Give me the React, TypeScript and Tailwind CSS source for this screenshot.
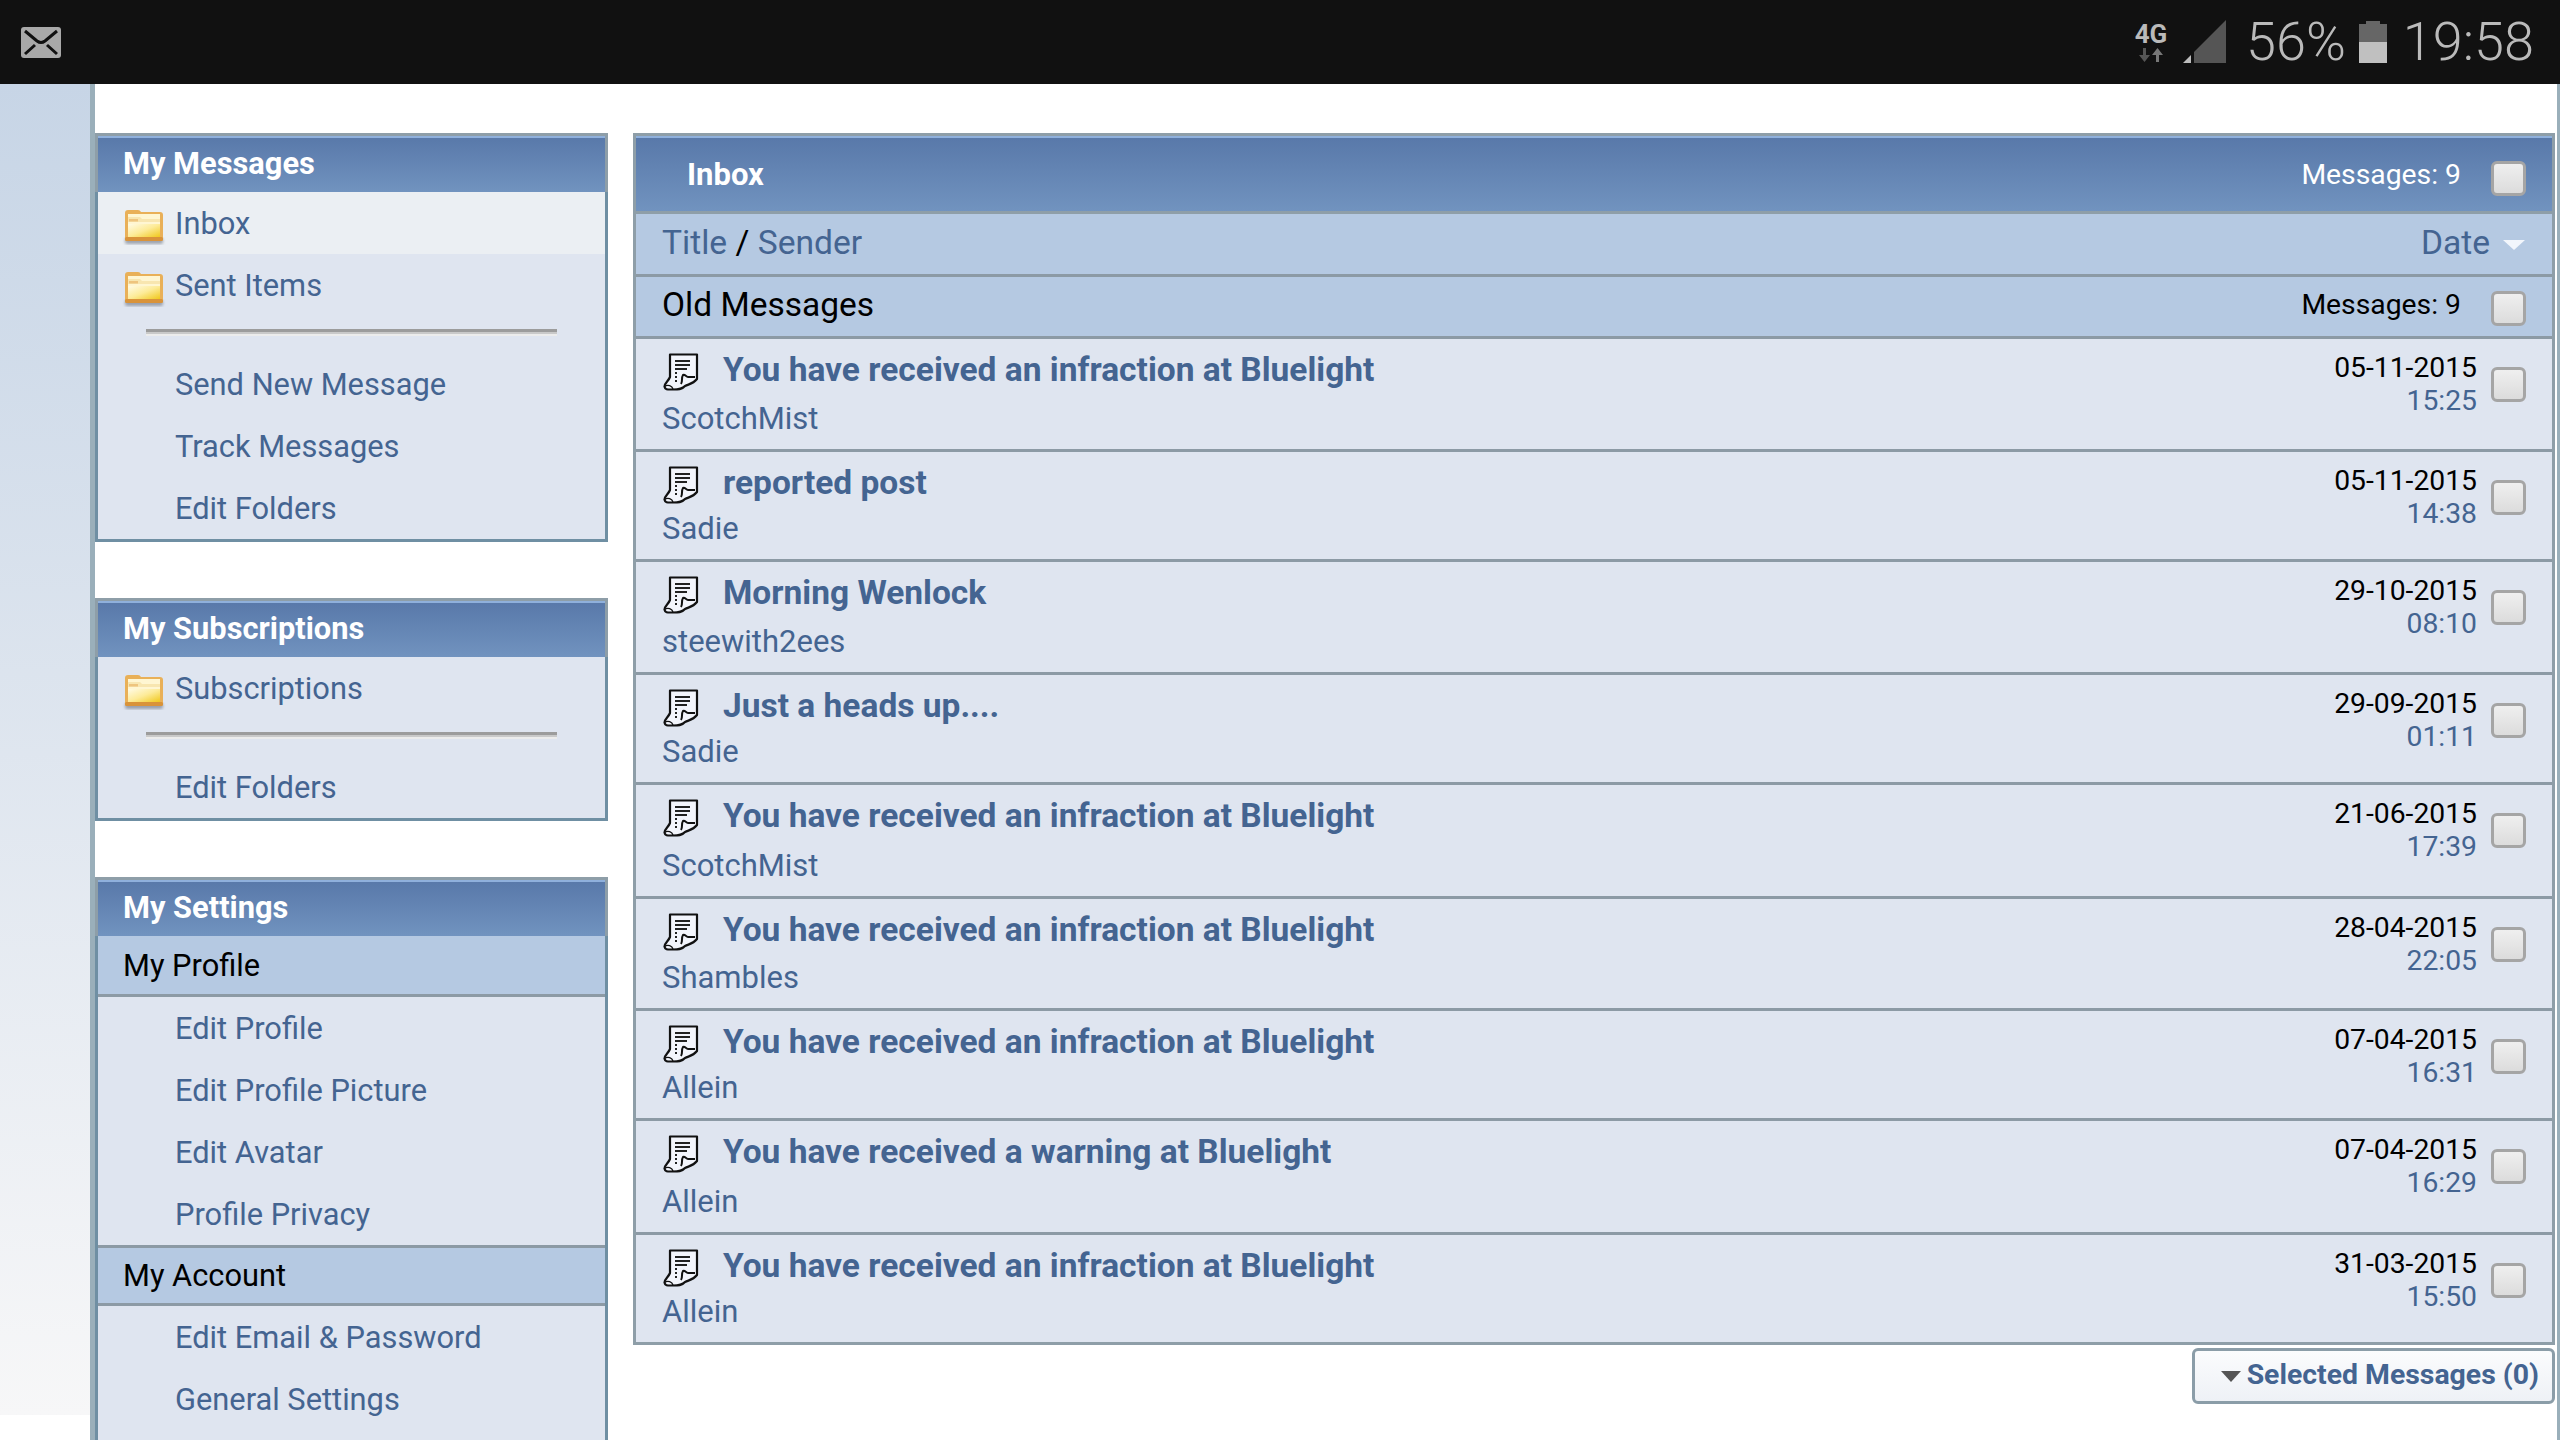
import React from "react";

const rows = [
  { h: "h-[113px]", t: "You have received an infraction at Bluelight", s: "ScotchMist", d: "05-11-2015", c: "15:25" },
  { h: "h-[110px]", t: "reported post", s: "Sadie", d: "05-11-2015", c: "14:38" },
  { h: "h-[113px]", t: "Morning Wenlock", s: "steewith2ees", d: "29-10-2015", c: "08:10" },
  { h: "h-[110px]", t: "Just a heads up....", s: "Sadie", d: "29-09-2015", c: "01:11" },
  { h: "h-[114px]", t: "You have received an infraction at Bluelight", s: "ScotchMist", d: "21-06-2015", c: "17:39" },
  { h: "h-[112px]", t: "You have received an infraction at Bluelight", s: "Shambles", d: "28-04-2015", c: "22:05" },
  { h: "h-[110px]", t: "You have received an infraction at Bluelight", s: "Allein", d: "07-04-2015", c: "16:31" },
  { h: "h-[114px]", t: "You have received a warning at Bluelight", s: "Allein", d: "07-04-2015", c: "16:29" },
  { h: "h-[107px]", t: "You have received an infraction at Bluelight", s: "Allein", d: "31-03-2015", c: "15:50" },
];

function Folder() {
  return (
    <svg width="44" height="40" viewBox="0 0 44 40" className="shrink-0">
      <defs>
        <linearGradient id="fg" x1="0" y1="0" x2="1" y2="1">
          <stop offset="0" stopColor="#fffbe6" />
          <stop offset="0.5" stopColor="#fdeb98" />
          <stop offset="1" stopColor="#f0c81c" />
        </linearGradient>
        <filter id="fb"><feGaussianBlur stdDeviation="1.4" /></filter>
      </defs>
      <rect x="3" y="31" width="38" height="6" rx="2" fill="#6b7280" opacity="0.6" filter="url(#fb)" />
      <path d="M3 6 Q3 3 6 3 H16 Q18 3 19 5 H38 Q41 5 41 8 V31 Q41 34 38 34 H6 Q3 34 3 31 Z" fill="#e9b058" />
      <path d="M6 7 H38 V30 H6 Z" fill="#fff6d2" />
      <path d="M6 10 H18 L20 12 H38 V15 H6 Z" fill="#f8e6b0" />
      <rect x="7" y="12" width="9" height="2.5" fill="#eec47e" />
      <path d="M6 17 H38 V30 H6 Z" fill="url(#fg)" />
      <rect x="3" y="30" width="38" height="4" rx="1.5" fill="#d9933a" />
    </svg>
  );
}

function NoteIcon() {
  return (
    <svg width="36" height="38" viewBox="0 0 36 38" className="shrink-0">
      <path d="M7 1.5 H34 V26 C30 31 26 31 22 33 C19 36.5 15 36.5 10 36.5 C5 36.5 2 37 1.5 33.5 C1.5 30 5.5 28 7 24 Z" fill="#f3f5fc" stroke="#111" strokeWidth="2.2" strokeLinejoin="round" />
      <path d="M12 8 H27 M12 12 H27 M12 16 H24" stroke="#222" strokeWidth="2" />
      <path d="M12 20 h2 M12 24 h2 M12 28 h2" stroke="#222" strokeWidth="2" />
      <path d="M18 31 C20 28 18 25 20 22 C22 21 23 24 25 24 H32" fill="none" stroke="#111" strokeWidth="2" />
      <path d="M1.5 33.5 C5 31 9 33 10 36" fill="none" stroke="#111" strokeWidth="1.4" />
    </svg>
  );
}

function Check({ cls = "" }: { cls?: string }) {
  return (
    <div className={`h-[35px] w-[35px] shrink-0 rounded-[6px] border-[3px] border-[#a5a5a5] bg-gradient-to-b from-[#efefef] to-[#dcdcdc] ${cls}`} />
  );
}

function Separator() {
  return (
    <div className="flex h-[37px] items-start pl-[48px] pr-[48px] pt-[13px]">
      <div className="h-[7px] w-full border-t-[3px] border-b-[2px] border-t-[#9c9c9c] border-b-[#ececec] bg-[#c9c9c9]" />
    </div>
  );
}

function PanelHeader({ children }: { children: React.ReactNode }) {
  return (
    <div className="flex h-[59px] items-center border-x-[3px] border-t-[3px] border-x-[#8e9ea8] border-t-[#8e9ea8] bg-gradient-to-b from-[#5878a9] to-[#7193bf] pl-[25px] pt-[1px] text-[30.8px] font-bold text-white shadow-[inset_0_2px_0_#8fb0dc]">
      {children}
    </div>
  );
}

function FolderItem({ label, active }: { label: string; active?: boolean }) {
  return (
    <div className={`flex h-[62px] items-center pl-[24px] pt-[2px] text-[30.8px] text-[#446491] ${active ? "bg-[#ebeff3]" : ""}`}>
      <span className="mr-[9px] mt-[5px] flex"><Folder /></span>
      <span>{label}</span>
    </div>
  );
}

function LinkItem({ label }: { label: string }) {
  return <div className="flex h-[62px] items-center pl-[77px] pt-[2px] text-[30.8px] text-[#446491]">{label}</div>;
}

function SubHead({ label, top }: { label: string; top?: boolean }) {
  return (
    <div className={`flex h-[61px] items-center border-b-[3px] border-b-[#8c9aa5] bg-[#b5c9e2] pl-[25px] pt-[2px] text-[30.8px] text-black ${top ? "border-t-[3px] border-t-[#8c9aa5]" : ""}`}>
      {label}
    </div>
  );
}

function Body({ children }: { children: React.ReactNode }) {
  return <div className="border-x-[3px] border-b-[3px] border-[#6f8fa3] bg-[#dfe5f0]">{children}</div>;
}

export default function App() {
  return (
    <div className="flex h-[1440px] w-[2560px] flex-col overflow-hidden bg-white font-['Roboto',sans-serif]">
      {/* status bar */}
      <div className="flex h-[84px] shrink-0 items-center justify-between bg-[#111111] pl-[21px] pr-[26px]">
        <svg width="40" height="31" viewBox="0 0 40 31">
          <rect width="40" height="31" rx="3" fill="#a9a9a9" />
          <path d="M4 4 L16 14 Q20 17 24 14 L36 4 M4 27 L14 18 M36 27 L26 18" fill="none" stroke="#111" strokeWidth="3" />
        </svg>
        <div className="flex items-center text-[#bababa]">
          <div className="mr-[15px] flex w-[34px] flex-col items-center">
            <span className="text-[26px] font-bold leading-[24px]">4G</span>
            <svg width="28" height="16" viewBox="0 0 28 16" className="mt-[1px]">
              <path d="M6 1 H9 V8 H13 L7.5 15 L2 8 H6 Z" fill="#555" />
              <path d="M19 15 H22 V8 H26 L20.5 1 L15 8 H19 Z" fill="#777" />
            </svg>
          </div>
          <svg width="43" height="43" viewBox="0 0 43 43" className="mr-[20px] mt-[-2px]">
            <path d="M43 0 V43 H11 V32 Z" fill="#555" />
            <path d="M8 35 V43 H0 Z" fill="#bdbdbd" />
          </svg>
          <span className="mr-[13px] text-[54px] leading-[60px] font-light">56%</span>
          <div className="mr-[16px] flex h-[42px] w-[28px] flex-col items-center">
            <div className="h-[3px] w-[14px] bg-[#666]" />
            <div className="h-[18px] w-full bg-[#666]" />
            <div className="h-[21px] w-full bg-[#c0c0c0]" />
          </div>
          <span className="text-[54px] leading-[60px] font-light">19:58</span>
        </div>
      </div>

      <div className="flex min-h-0 flex-1">
        {/* left strip */}
        <div className="h-[1331px] w-[90px] shrink-0 bg-gradient-to-b from-[#c7d5e6] to-[#f7f7f8]" />
        <div className="w-[5px] shrink-0 bg-[#9aafba]" />

        {/* sidebar */}
        <div className="flex w-[513px] shrink-0 flex-col gap-[56px] pt-[49px]">
          <div>
            <PanelHeader>My Messages</PanelHeader>
            <Body>
              <FolderItem label="Inbox" active />
              <FolderItem label="Sent Items" />
              <Separator />
              <LinkItem label="Send New Message" />
              <LinkItem label="Track Messages" />
              <LinkItem label="Edit Folders" />
            </Body>
          </div>
          <div>
            <PanelHeader>My Subscriptions</PanelHeader>
            <Body>
              <FolderItem label="Subscriptions" />
              <Separator />
              <LinkItem label="Edit Folders" />
            </Body>
          </div>
          <div>
            <PanelHeader>My Settings</PanelHeader>
            <Body>
              <SubHead label="My Profile" />
              <LinkItem label="Edit Profile" />
              <LinkItem label="Edit Profile Picture" />
              <LinkItem label="Edit Avatar" />
              <LinkItem label="Profile Privacy" />
              <SubHead label="My Account" top />
              <LinkItem label="Edit Email & Password" />
              <LinkItem label="General Settings" />
              <div className="h-[62px]" />
            </Body>
          </div>
        </div>

        {/* main */}
        <div className="ml-[25px] flex min-w-0 flex-1 flex-col border-r-[3px] border-r-[#9aafba] pr-[2px] pt-[49px]">
          <div className="border-x-[3px] border-b-[3px] border-[#8e9ea8] bg-[#dfe5f0]">
            <div className="flex h-[81px] items-center border-t-[3px] border-b-[3px] border-[#8e9ea8] bg-gradient-to-b from-[#5878a9] to-[#7193bf] pl-[51px] pr-[26px] pt-[3px] text-white shadow-[inset_0_2px_0_#8fb0dc]">
              <span className="text-[31px] font-bold">Inbox</span>
              <span className="ml-auto text-[28.3px]">Messages: 9</span>
              <Check cls="ml-[30px] mt-[6px]" />
            </div>
            <div className="flex h-[63px] items-center border-b-[3px] border-[#8c9aa5] bg-[#b5c9e2] pb-[1px] pl-[26px] pr-[27px] text-[33.6px] text-[#446491]">
              <span>Title <span className="text-black">/</span> Sender</span>
              <span className="ml-auto">Date</span>
              <svg width="22" height="10" viewBox="0 0 22 10" className="ml-[13px] mt-[2px]">
                <path d="M0 0 H22 L11 10 Z" fill="#f2f6fc" />
              </svg>
            </div>
            <div className="flex h-[62px] items-center border-b-[3px] border-[#8c9aa5] bg-[#b5c9e2] pl-[26px] pr-[26px] text-black">
              <span className="pb-[3px] text-[33.5px]">Old Messages</span>
              <span className="ml-auto pb-[2px] text-[28.3px]">Messages: 9</span>
              <Check cls="ml-[30px] mt-[3px]" />
            </div>
            {rows.map((r, i) => (
              <div key={i} className={`flex ${r.h} items-start border-[#8c9aa5] pl-[26px] pr-[26px] ${i < rows.length - 1 ? "border-b-[3px]" : ""}`}>
                <div className="flex h-full flex-col justify-between pb-[10px] pt-[11px]">
                  <div className="flex h-[40px] items-center">
                    <span className="ml-[1px] mr-[24px] mt-[4px] flex"><NoteIcon /></span>
                    <span className="text-[33.5px] font-bold text-[#446491]">{r.t}</span>
                  </div>
                  <div className="flex h-[40px] items-center text-[31px] text-[#446491]">{r.s}</div>
                </div>
                <div className="ml-auto flex flex-col items-end pt-[12px] text-[28.3px] leading-[33px]">
                  <span className="text-black">{r.d}</span>
                  <span className="text-[#446491]">{r.c}</span>
                </div>
                <Check cls="ml-[14px] mt-[28px]" />
              </div>
            ))}
          </div>
          <div className="mt-[3px] flex justify-end">
            <div className="flex h-[56px] w-[363px] items-center justify-end rounded-[6px] border-[3px] border-[#8b9da8] bg-gradient-to-b from-[#fbfcfd] to-[#eef1f6] pb-[2px] pr-[13px] text-[28.4px] font-bold text-[#446491]">
              <svg width="20" height="11" viewBox="0 0 20 11" className="mr-[6px] mt-[2px]">
                <path d="M0 0 H20 L10 11 Z" fill="#555" />
              </svg>
              Selected Messages (0)
            </div>
          </div>
        </div>
      </div>
    </div>
  );
}
